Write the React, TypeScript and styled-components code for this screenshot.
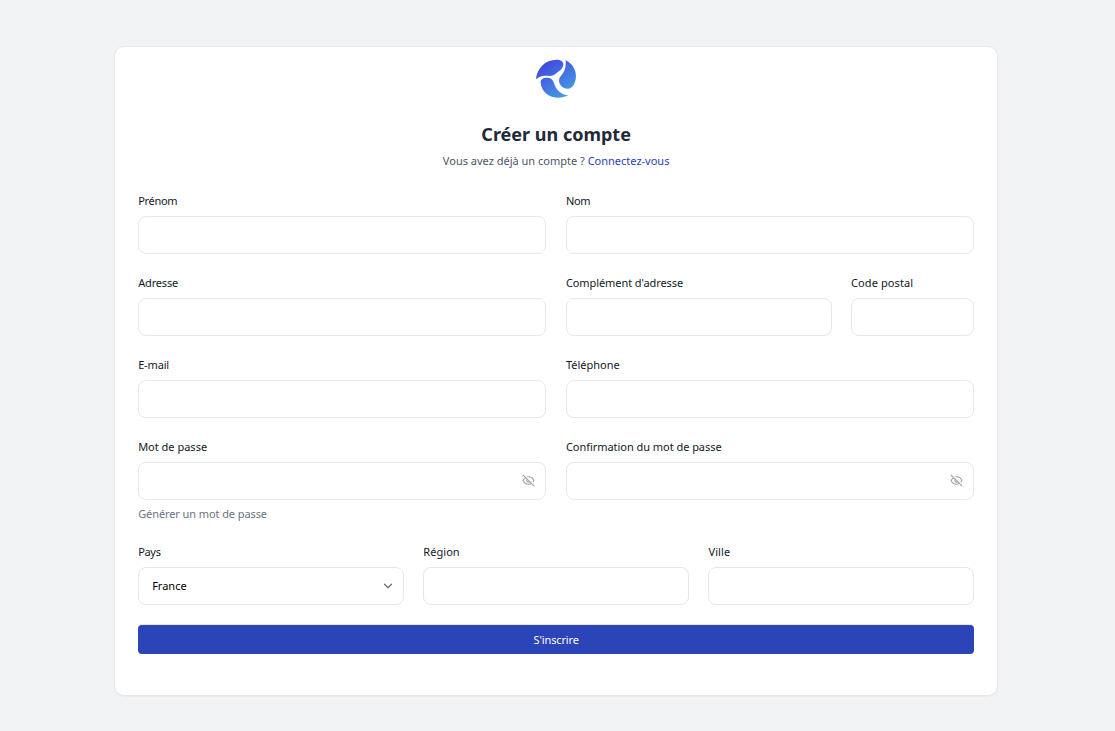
import React from "react";
import styled, { createGlobalStyle } from "styled-components";

const GlobalStyle = createGlobalStyle`
  *, *::before, *::after { box-sizing: border-box; }
  body {
    margin: 0;
    background: #f2f3f5;
    font-family: "Noto Sans", "Open Sans", sans-serif;
    font-size: 11px;
    line-height: 18px;
    color: #111827;
  }
`;

const Page = styled.main`
  min-height: 731px;
  padding-top: 46px;
`;

const Card = styled.section`
  width: 884px;
  height: 650px;
  margin-left: 114px;
  padding: 11px 22.85px 0 23.15px;
  background: #fff;
  border: 1px solid #e5e7eb;
  border-radius: 10px;
  box-shadow: 0 1px 2px rgba(0, 0, 0, 0.04);
`;

const Header = styled.header`
  display: flex;
  flex-direction: column;
  align-items: center;
  height: 134px;
`;

const Logo = styled.svg`
  display: block;
  width: 42px;
  height: 41px;
`;

const Title = styled.h1`
  margin: 21px 0 0;
  font-size: 18px;
  line-height: 28px;
  font-weight: 700;
  color: #1f2937;
`;

const Subtitle = styled.p`
  margin: 4px 0 0;
  color: #4b5563;
`;

const Link = styled.a`
  color: #2b44b8;
  text-decoration: none;
`;

const Form = styled.form`
  display: grid;
  grid-template-columns: repeat(12, minmax(0, 1fr));
  gap: 20px 19.5px;
`;

const Field = styled.div<{ $span: number }>`
  grid-column: span ${(p) => p.$span};
  display: flex;
  flex-direction: column;
`;

const Label = styled.label<{ $spacing?: number }>`
  align-self: flex-start;
  margin-bottom: 6px;
  letter-spacing: ${(p) => p.$spacing ?? 0}px;
  white-space: nowrap;
`;

const Control = styled.div`
  display: flex;
  align-items: center;
  height: 38px;
  padding: 0 10px 0 13px;
  border: 1px solid #e5e7eb;
  border-radius: 8px;
  background: #fff;
  color: #000;
`;

const Input = styled.input`
  flex: 1;
  min-width: 0;
  padding: 0;
  border: 0;
  outline: 0;
  background: transparent;
  font: inherit;
`;

const Value = styled.span`
  flex: 1;
`;

const Icon = styled.svg`
  flex: none;
  fill: none;
  stroke-linecap: round;
  stroke-linejoin: round;
`;

const EyeIcon = styled(Icon)`
  width: 13px;
  height: 13px;
  margin-bottom: 1px;
  stroke: #9ca3af;
  stroke-width: 2;
`;

const Helper = styled.span`
  margin-top: 5px;
  letter-spacing: -0.09px;
  color: #6b7280;
`;

const Submit = styled.button`
  width: 100%;
  height: 29px;
  margin-top: 20px;
  padding: 0;
  border: 0;
  border-radius: 4px;
  background: #2b44b8;
  box-shadow: 0 -1px 0 #e5e7eb;
  color: #fff;
  font: inherit;
  letter-spacing: -0.15px;
`;

const EyeOff = () => (
  <EyeIcon viewBox="0 0 24 24">
    <path d="M9.88 9.88a3 3 0 1 0 4.24 4.24" />
    <path d="M10.73 5.08A10.43 10.43 0 0 1 12 5c7 0 10 7 10 7a13.16 13.16 0 0 1-1.67 2.68" />
    <path d="M6.61 6.61A13.526 13.526 0 0 0 2 12s3 7 10 7a9.74 9.74 0 0 0 5.39-1.61" />
    <path d="M2 2l20 20" />
  </EyeIcon>
);

const TextField = ({ label, span, spacing, secret, helper }: {
  label: string; span: number; spacing?: number; secret?: boolean; helper?: string;
}) => (
  <Field $span={span}>
    <Label $spacing={spacing}>{label}</Label>
    <Control>
      <Input type={secret ? "password" : "text"} aria-label={label} />
      {secret && <EyeOff />}
    </Control>
    {helper && <Helper>{helper}</Helper>}
  </Field>
);

export default function App() {
  return (
    <Page>
      <GlobalStyle />
      <Card>
        <Header>
          <Logo viewBox="27 24 126 123">
            <defs>
              <linearGradient id="blade" gradientUnits="userSpaceOnUse" x1="55" y1="35" x2="130" y2="140">
                <stop offset="0" stopColor="#4048dc" />
                <stop offset="1" stopColor="#46a0e4" />
              </linearGradient>
            </defs>
            <g fill="url(#blade)">
              <path d="M30 88C32 54 60 27 95 29C111 30 116 42 109 53C104 62 94 65 87 73C79 81 64 76 50 78C42 80 36 83 30 88Z" />
              <path d="M119 31C144 43 157 72 146 98C140 116 122 121 109 111C98 102 96 89 104 79C115 66 121 52 119 31Z" />
              <path d="M44 96C44 85 58 81 70 84C81 87 83 97 87 107C94 123 108 134 127 136C93 153 46 139 44 96Z" />
            </g>
          </Logo>
          <Title>Créer un compte</Title>
          <Subtitle>Vous avez déjà un compte ? <Link>Connectez-vous</Link></Subtitle>
        </Header>
        <Form>
          <TextField label="Prénom" span={6} spacing={-0.3} />
          <TextField label="Nom" span={6} spacing={-0.3} />
          <TextField label="Adresse" span={6} spacing={-0.15} />
          <TextField label="Complément d'adresse" span={4} spacing={-0.08} />
          <TextField label="Code postal" span={2} spacing={0.1} />
          <TextField label="E-mail" span={6} spacing={-0.15} />
          <TextField label="Téléphone" span={6} />
          <TextField label="Mot de passe" span={6} secret helper="Générer un mot de passe" />
          <TextField label="Confirmation du mot de passe" span={6} spacing={-0.04} secret />
          <Field $span={4}>
            <Label $spacing={-0.3}>Pays</Label>
            <Control>
              <Value>France</Value>
              <Icon width="10" height="10" viewBox="0 0 10 10" stroke="#6b7280" strokeWidth="1.3">
                <path d="M1.5 3.3L5 6.8L8.5 3.3" />
              </Icon>
            </Control>
          </Field>
          <TextField label="Région" span={4} spacing={0.05} />
          <TextField label="Ville" span={4} spacing={0.1} />
        </Form>
        <Submit type="button">S'inscrire</Submit>
      </Card>
    </Page>
  );
}
